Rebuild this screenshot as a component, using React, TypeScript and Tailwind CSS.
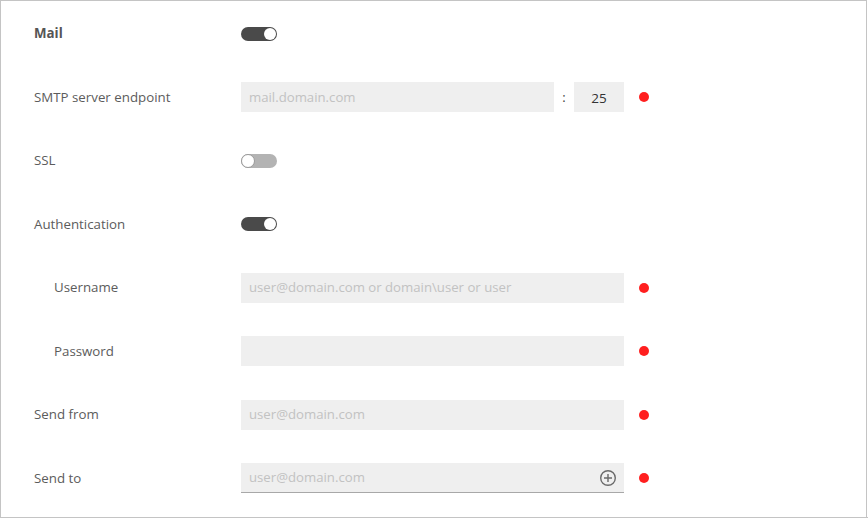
import React from "react";

const font = { fontFamily: '"Open Sans", "Noto Sans", sans-serif' };

function Toggle({ on }: { on: boolean }) {
  return on ? (
    <div className="relative h-[14px] w-[36px] rounded-full bg-[#4a4a4a]">
      <div className="absolute right-[1px] top-[1px] h-[12px] w-[12px] rounded-full bg-white" />
    </div>
  ) : (
    <div className="relative h-[14px] w-[36px] rounded-full bg-[#b3b3b3]">
      <div className="absolute left-0 top-0 h-[14px] w-[14px] rounded-full border border-[#9a9a9a] bg-white" />
    </div>
  );
}

function Dot() {
  return <div className="ml-[15px] h-[10px] w-[10px] rounded-full bg-[#ff1f1f]" />;
}

function Row({ label, indent, bold, children }: { label: string; indent?: boolean; bold?: boolean; children?: React.ReactNode }) {
  return (
    <div className="flex h-[63.5px] items-center">
      <div
        className={`w-[207px] shrink-0 pt-[1px] text-[13.3px] ${bold ? "font-bold text-[#555]" : "text-[#5c5c5c]"} ${indent ? "pl-[20px]" : ""}`}
      >
        {label}
      </div>
      <div className="flex items-center">{children}</div>
    </div>
  );
}

function Field({ placeholder, w = 383, underline, icon }: { placeholder?: string; w?: number; underline?: boolean; icon?: boolean }) {
  return (
    <div
      className={`flex h-[30px] items-center justify-between bg-[#efefef] pl-[8px] pr-[7px] pt-[1px] text-[13.2px] text-[#c2c2c2] ${underline ? "border-b border-[#a8a8a8]" : ""}`}
      style={{ width: w }}
    >
      <span>{placeholder}</span>
      {icon && (
        <svg width="18" height="18" viewBox="0 0 18 18" fill="none" stroke="#6a6a6a" strokeWidth="1.4">
          <circle cx="9" cy="9" r="7.3" />
          <path d="M9 5v8M5 9h8" />
        </svg>
      )}
    </div>
  );
}

export default function App() {
  return (
    <div className="h-[518px] w-[868px] bg-white" style={font}>
      <div className="h-[517px] w-[867px] border-l border-r border-t border-[#c4c4c4] pl-[33px] pt-[1px]">
        <Row label="Mail" bold>
          <Toggle on />
        </Row>
        <Row label="SMTP server endpoint">
          <Field placeholder="mail.domain.com" w={313} />
          <span className="w-[20px] text-center text-[13px] text-[#444]">:</span>
          <div className="flex h-[30px] w-[50px] items-center justify-center bg-[#efefef] pt-[1px] text-[13.5px] text-[#333]">25</div>
          <Dot />
        </Row>
        <Row label="SSL">
          <Toggle on={false} />
        </Row>
        <Row label="Authentication">
          <Toggle on />
        </Row>
        <Row label="Username" indent>
          <Field placeholder="user@domain.com or domain\user or user" />
          <Dot />
        </Row>
        <Row label="Password" indent>
          <Field />
          <Dot />
        </Row>
        <Row label="Send from">
          <Field placeholder="user@domain.com" />
          <Dot />
        </Row>
        <Row label="Send to">
          <Field placeholder="user@domain.com" underline icon />
          <Dot />
        </Row>
      </div>
      <div className="h-[1px] w-[868px] bg-[#c4c4c4]" />
    </div>
  );
}
